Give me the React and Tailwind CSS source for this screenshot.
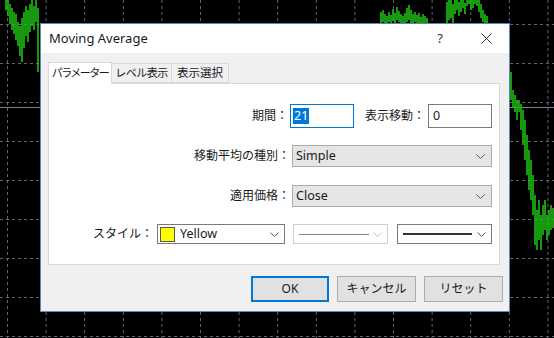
import React from 'react';

const bars = [
  [6, 0, 10], [8, 0, 16], [10, 4, 24], [12, 8, 30], [14, 12, 34], [16, 14, 40], [18, 22, 46],
  [20, 26, 56], [22, 18, 62], [24, 12, 48], [26, 6, 36], [28, 10, 42], [30, 4, 32], [32, 0, 26],
  [34, 6, 30], [36, 0, 22], [38, 8, 72],
  [381, 12, 23], [383, 10, 22], [385, 14, 23], [387, 16, 23], [389, 12, 22], [391, 15, 23],
  [393, 9, 21], [395, 13, 23], [397, 7, 20], [399, 11, 22], [401, 14, 23], [403, 16, 23],
  [405, 13, 23], [407, 8, 22], [409, 5, 20], [411, 10, 23], [413, 14, 23], [415, 12, 22],
  [417, 15, 23], [419, 13, 23], [421, 17, 23], [423, 14, 23], [425, 16, 23], [427, 18, 23],
  [447, 2, 23], [449, 0, 20], [451, 0, 18], [453, 4, 23], [455, 0, 14], [457, 0, 10],
  [459, 2, 16], [461, 0, 12], [463, 0, 8], [465, 3, 14], [467, 0, 6], [469, 0, 4],
  [471, 0, 10], [473, 0, 8], [475, 0, 4], [477, 0, 6], [479, 0, 12], [481, 4, 18],
  [483, 10, 22], [485, 14, 23], [487, 16, 23],
  [511, 72, 100], [513, 90, 108], [515, 95, 112], [517, 100, 120], [519, 100, 112],
  [521, 104, 130], [523, 110, 145], [525, 120, 160], [527, 135, 175], [529, 150, 190],
  [531, 160, 200], [533, 175, 215], [535, 195, 245], [537, 210, 250], [539, 200, 240],
  [541, 215, 250], [543, 205, 235], [545, 200, 230], [547, 215, 240], [549, 210, 235],
  [551, 205, 230], [553, 208, 228],
];

const Chart = () => (
  <svg className="block" width="554" height="338" viewBox="0 0 554 338">
    <rect width="554" height="338" fill="#000" />
    {Array.from({ length: 15 }, (_, i) => (
      <line key={`v${i}`} x1={7.5 + i * 38.6} y1="0" x2={7.5 + i * 38.6} y2="338" stroke="#5d6675" strokeDasharray="3 3" />
    ))}
    {Array.from({ length: 9 }, (_, i) => (
      <line key={`h${i}`} x1="0" y1={24.5 + i * 39} x2="554" y2={24.5 + i * 39} stroke="#5d6675" strokeDasharray="3 3" />
    ))}
    <line x1="0" y1="107.5" x2="554" y2="107.5" stroke="#7c828c" />
    {bars.map(([x, a, b], i) => (
      <line key={i} x1={x} y1={a} x2={x} y2={b} stroke="#1fbf12" strokeWidth="1.6" />
    ))}
  </svg>
);

const Chevron = ({ color = '#5a5a5a' }) => (
  <svg width="9" height="5" viewBox="0 0 9 5" className="shrink-0">
    <polyline points="0.5,0.5 4.5,4.5 8.5,0.5" fill="none" stroke={color} strokeWidth="1" />
  </svg>
);

const Select = ({ value, width }) => (
  <div className={`flex h-[22px] items-center justify-between border border-[#acacac] bg-[#e5e5e5] pl-[3px] pr-[6px] text-[12.5px] text-[#1a1a1a] ${width}`}>
    <span>{value}</span>
    <Chevron />
  </div>
);

const Button = ({ children, primary }) => (
  <div
    className={`flex h-[26px] items-center justify-center bg-[#e1e1e1] text-[12px] text-[#1a1a1a] ${
      primary ? 'w-[78px] border-2 border-[#0078d7]' : 'w-[79px] border border-[#adadad]'
    }`}
  >
    {children}
  </div>
);

export default function App() {
  return (
    <div
      className="relative h-[338px] w-[554px] overflow-hidden"
      style={{ fontFamily: '"Noto Sans", "Noto Sans CJK JP", sans-serif' }}
    >
      <Chart />

      <div className="absolute left-[40px] top-[23px] flex h-[289px] w-[470px] flex-col border border-[#5b87c0] bg-[#f0f0f0]">
        <div className="flex h-[29px] shrink-0 items-center bg-white pl-[8px] pr-[17px]">
          <span className="text-[13px] text-[#1a1a1a]">Moving Average</span>
          <span className="ml-auto text-[13px] text-[#333]">?</span>
          <svg width="11" height="11" viewBox="0 0 11 11" className="ml-[38px]">
            <path d="M0.5 0.5 L10.5 10.5 M10.5 0.5 L0.5 10.5" stroke="#333" strokeWidth="1" />
          </svg>
        </div>

        <div className="flex flex-1 flex-col px-[7px] pt-[9px]">
          <div className="flex h-[21px] items-end whitespace-nowrap text-[#1a1a1a]">
            <div className="relative z-10 -mb-px flex h-[22px] w-[64px] items-center justify-center border border-b-0 border-[#d9d9d9] bg-white text-[11px] tracking-[-1.5px]">
              パラメーター
            </div>
            <div className="flex h-[20px] w-[60px] items-center justify-center border border-l-0 border-[#d9d9d9] bg-[#f0f0f0] text-[11px] tracking-[-0.5px]">
              レベル表示
            </div>
            <div className="flex h-[20px] w-[57px] items-center justify-center border border-l-0 border-[#d9d9d9] bg-[#f0f0f0] text-[11.5px]">
              表示選択
            </div>
          </div>

          <div className="flex h-[182px] w-[452px] flex-col border border-[#d9d9d9] bg-white pr-[7px] text-[12px] text-[#1a1a1a]">
            <div className="mt-[20px] flex h-[24px] items-center justify-end">
              <span className="mr-[2px]">期間：</span>
              <div className="flex h-[24px] w-[64px] items-center border border-[#0078d7] bg-white pl-[2px]">
                <span className="bg-[#0078d7] px-[1px] text-[12.5px] leading-[16px] text-white">21</span>
              </div>
              <span className="ml-[11px] mr-[3px]">表示移動：</span>
              <div className="flex h-[24px] w-[64px] items-center border border-[#7a7a7a] bg-white pl-[4px] text-[12.5px]">
                0
              </div>
            </div>

            <div className="mt-[17px] flex items-center justify-end">
              <span className="mr-[2px]">移動平均の種別：</span>
              <Select value="Simple" width="w-[200px]" />
            </div>

            <div className="mt-[18px] flex items-center justify-end">
              <span className="mr-[2px]">適用価格：</span>
              <Select value="Close" width="w-[200px]" />
            </div>

            <div className="mt-[17px] flex items-center justify-end">
              <span className="mr-[4px]">スタイル：</span>
              <div className="flex h-[20px] w-[128px] items-center border border-[#7a7a7a] bg-white pl-[2px] pr-[5px]">
                <span className="h-[15px] w-[15px] border border-[#555] bg-[#ffff00]" />
                <span className="ml-[5px] text-[12.5px]">Yellow</span>
                <span className="ml-auto">
                  <Chevron />
                </span>
              </div>
              <div className="ml-[8px] flex h-[20px] w-[95px] items-center border border-[#cfcfcf] bg-white pl-[5px] pr-[5px]">
                <span className="h-px w-[70px] bg-[#808080]" />
                <span className="ml-auto">
                  <Chevron color="#c4c4c4" />
                </span>
              </div>
              <div className="ml-[9px] flex h-[20px] w-[95px] items-center border border-[#7a7a7a] bg-white pl-[5px] pr-[5px]">
                <span className="h-[2px] w-[69px] bg-[#333]" />
                <span className="ml-auto">
                  <Chevron />
                </span>
              </div>
            </div>
          </div>

          <div className="mr-[-1px] mt-[11px] flex justify-end gap-[8px]">
            <Button primary>OK</Button>
            <Button>キャンセル</Button>
            <Button>リセット</Button>
          </div>
        </div>
      </div>
    </div>
  );
}
